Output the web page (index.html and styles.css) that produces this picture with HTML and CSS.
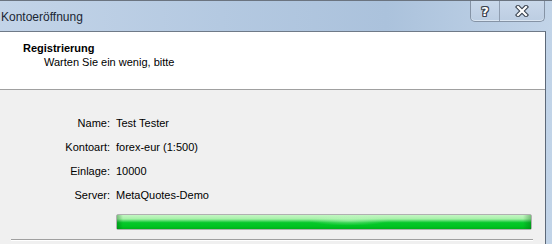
FILE: index.html
```html
<!DOCTYPE html>
<html lang="de">
<head>
    <meta charset="UTF-8">
    <title>Kontoeröffnung</title>
    <link rel="stylesheet" href="styles.css">
</head>
<body>

    <div class="window">
        <!-- Titelleiste -->
        <div class="titlebar">
            <span class="title">Kontoeröffnung</span>
            <div class="caption-buttons">
                <span class="cap-btn help">?</span>
                <span class="cap-btn close">
                    <svg width="14" height="12" viewBox="0 0 14 12">
                        <path d="M3 2 L11 10 M11 2 L3 10" stroke="#3a4350" stroke-width="4.4" stroke-linecap="square"/>
                        <path d="M3 2 L11 10 M11 2 L3 10" stroke="#ffffff" stroke-width="2.2" stroke-linecap="square"/>
                    </svg>
                </span>
            </div>
        </div>

        <div class="client">
            <div class="header">
                <div class="header-title">Registrierung</div>
                <div class="header-sub">Warten Sie ein wenig, bitte</div>
            </div>

            <div class="content">
                <div class="details">
                    <span class="label">Name:</span><span class="value">Test Tester</span>
                    <span class="label">Kontoart:</span><span class="value">forex-eur (1:500)</span>
                    <span class="label">Einlage:</span><span class="value">10000</span>
                    <span class="label">Server:</span><span class="value">MetaQuotes-Demo</span>
                </div>
                <div class="progress"><div class="progress-fill"></div></div>
                <div class="bottom-line"></div>
            </div>
        </div>
    </div>

</body>
</html>
```
FILE: styles.css
```css
body {
    margin: 0;
    padding: 0;
    font-family: "Liberation Sans", Arial, sans-serif;
    font-size: 11px;
    color: #000;
    overflow: hidden;
}
.window {
    width: 552px;
    height: 244px;
    display: flex;
    flex-direction: column;
    background: linear-gradient(90deg, #c3d4e8 0%, #b4c9e1 40%, #abc2dc 70%, #c2d4e8 100%);
    border-top: 1px solid #6b7480;
    box-sizing: border-box;
    overflow: hidden;
}
.titlebar {
    height: 30px;
    display: flex;
    align-items: flex-start;
    padding-right: 7px;
    flex-shrink: 0;
}
.title {
    font-size: 12px;
    color: #1b2634;
    padding-left: 1px;
    margin-top: 9px;
}
.caption-buttons {
    margin-left: auto;
    display: flex;
    height: 20px;
    border: 1px solid #8593a5;
    border-top: none;
    border-radius: 0 0 5px 5px;
    background: linear-gradient(#c9d8ea, #bccde2);
    box-shadow: inset 0 -1px 0 #dbe6f2;
}
.cap-btn {
    display: flex;
    align-items: center;
    justify-content: center;
}
.help {
    width: 28px;
    border-right: 1px solid #8f9db0;
    font-family: "DejaVu Sans", sans-serif;
    font-weight: bold;
    font-size: 13px;
    color: #fff;
    text-shadow: 1px 0 0 #3a4350, -1px 0 0 #3a4350, 0 1px 0 #3a4350, 0 -1px 0 #3a4350,
                 1px 1px 0 #3a4350, -1px -1px 0 #3a4350, 1px -1px 0 #3a4350, -1px 1px 0 #3a4350;
}
.close {
    width: 44px;
}
.client {
    flex: 1;
    margin-right: 6px;
    border-top: 1px solid #6f7a88;
    border-right: 1px solid #5d6978;
    background: #f0f0f0;
    display: flex;
    flex-direction: column;
}
.header {
    height: 58px;
    background: #fff;
    border-bottom: 1px solid #a0a0a0;
    padding: 9px 0 0 23px;
    box-sizing: border-box;
    line-height: 14px;
    flex-shrink: 0;
}
.header-title {
    font-weight: bold;
}
.header-sub {
    padding-left: 21px;
}
.content {
    padding-top: 21px;
}
.details {
    display: grid;
    grid-template-columns: 110px auto;
    column-gap: 6px;
    grid-auto-rows: 24px;
    line-height: 24px;
}
.label {
    text-align: right;
}
.progress {
    margin: 7px 0 0 116px;
    width: 416px;
    height: 16px;
    border: 1px solid #b0b0b0;
    border-radius: 2px;
    box-sizing: border-box;
    background: #e6e6e6;
}
.progress-fill {
    height: 100%;
    background:
        radial-gradient(ellipse 40px 5px at 56% 40%, rgba(200, 250, 200, 0.5), rgba(200, 250, 200, 0)),
        linear-gradient(90deg, rgba(0, 90, 10, 0.35) 0, rgba(0, 90, 10, 0) 6px, rgba(0, 90, 10, 0) 406px, rgba(0, 90, 10, 0.35) 414px),
        linear-gradient(#c4f7c4 0%, #a6f0a8 28%, #4ddb66 42%, #06c72b 55%, #00c522 80%, #00b01c 100%);
}
.bottom-line {
    margin: 9px 0 0 11px;
    width: 522px;
    height: 1px;
    background: #a0a0a0;
    border-bottom: 1px solid #fff;
}
```
